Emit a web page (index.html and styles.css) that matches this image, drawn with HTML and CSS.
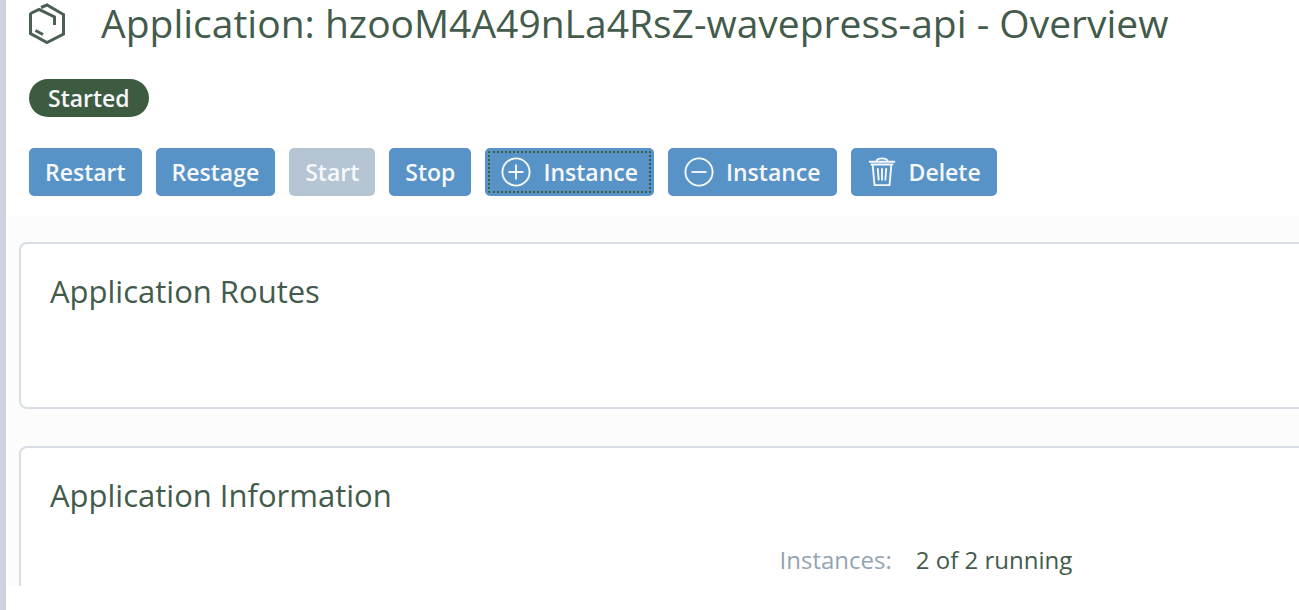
FILE: index.html
```html
<!DOCTYPE html>
<html lang="en">
<head>
<meta charset="utf-8">
<meta name="viewport" content="width=device-width, initial-scale=1">
<title>Application Overview</title>
<link rel="stylesheet" href="styles.css">
</head>
<body>
<div class="page">
  <header class="header">
    <div class="title-row">
      <svg class="app-icon" viewBox="0 0 36 42" aria-hidden="true">
        <path d="M1.500 11.500 10 7.500 25.500 15V23M1.500 11V31.500L18 40.500 34.500 32V12.500L18 3 12 5.500M6.500 28.500 14 32.500"/>
      </svg>
      <h1 class="title">Application: hzooM4A49nLa4RsZ-wavepress-api - Overview</h1>
    </div>
    <span class="status">Started</span>
    <div class="actions">
      <button class="button" type="button">Restart</button>
      <button class="button" type="button">Restage</button>
      <button class="button" type="button" disabled>Start</button>
      <button class="button" type="button">Stop</button>
      <button class="button button-current" type="button">
        <svg class="button-icon" viewBox="0 0 32 32" aria-hidden="true"><circle cx="16" cy="16" r="14.500"/><path d="M8 16H24M16 8V24"/></svg>
        Instance
      </button>
      <button class="button" type="button">
        <svg class="button-icon" viewBox="0 0 32 32" aria-hidden="true"><circle cx="16" cy="16" r="14.500"/><path d="M8 16H24"/></svg>
        Instance
      </button>
      <button class="button" type="button">
        <svg class="button-icon" viewBox="0 0 32 32" aria-hidden="true"><path d="M2 5H30M10 4Q11 1.500 16 1.500T22 4M4 8H28M6 8 8 30H24L26 8M11.500 12 12.500 25M16 12V25M20.500 12 19.500 25"/></svg>
        Delete
      </button>
    </div>
  </header>
  <main class="content">
    <section class="card">
      <h2 class="card-title">Application Routes</h2>
    </section>
    <section class="card card-open">
      <h2 class="card-title">Application Information</h2>
      <dl class="facts">
        <dt class="fact-label">Instances:</dt>
        <dd class="fact-value">2 of 2 running</dd>
      </dl>
    </section>
  </main>
</div>
</body>
</html>
```
FILE: styles.css
```css
* {
  box-sizing: border-box;
}

body {
  margin: 0;
  background: #fff;
  color: #435b4b;
  font-family: "Open Sans", sans-serif;
}

.page {
  min-height: 100vh;
  border-left: 6px solid #cbd4de;
}

.header {
  display: flex;
  flex-direction: column;
  align-items: flex-start;
  padding: 0 24px 20px 23px;
}

.title-row {
  display: flex;
  align-items: center;
  gap: 36px;
  min-height: 46px;
}

.app-icon {
  width: 36px;
  height: 42px;
  flex: none;
  fill: none;
  stroke: #4b6052;
  stroke-width: 3;
}

.title {
  margin: 0;
  font-size: 39px;
  font-weight: 400;
  line-height: 46px;
}

.status {
  margin-top: 33px;
  padding: 0 19px;
  border-radius: 19px;
  background: #3d5b40;
  color: #f4f6fa;
  font-size: 23px;
  font-weight: 600;
  line-height: 38px;
}

.actions {
  display: flex;
  flex-wrap: wrap;
  gap: 14px;
  margin-top: 31px;
}

.button {
  display: flex;
  align-items: center;
  gap: 12px;
  height: 48px;
  padding: 0 16px;
  border: 0;
  border-radius: 5px;
  background: #5893c7;
  color: #f6f8fb;
  font: 600 23px/32px "Open Sans", sans-serif;
  white-space: nowrap;
}

.button:disabled {
  background: #b5c5d3;
  color: #f6f8fb;
}

.button-current {
  outline: 2px dotted #3d5b40;
  outline-offset: -5px;
}

.button-icon {
  width: 30px;
  height: 30px;
  flex: none;
  fill: none;
  stroke: currentColor;
  stroke-width: 2;
}

.content {
  display: flex;
  flex-direction: column;
  gap: 37px;
  padding: 26px 0 0 13px;
  background: #fcfcfd;
}

.card {
  min-height: 167px;
  padding: 27px 29px;
  border: 2px solid #d8dee6;
  border-right: 0;
  border-radius: 8px 0 0 8px;
  background: #fff;
}

.card-open {
  min-height: 140px;
  padding-bottom: 8px;
  border-bottom: 0;
  border-bottom-left-radius: 0;
}

.card-title {
  margin: 0;
  font-size: 31px;
  font-weight: 400;
  line-height: 40px;
}

.facts {
  display: grid;
  grid-template-columns: 69% 1fr;
  gap: 24px;
  margin: 27px 0 0;
  font-size: 24px;
  line-height: 36px;
}

.fact-label {
  color: #93a4b3;
  text-align: right;
}

.fact-value {
  margin: 0;
}
```
